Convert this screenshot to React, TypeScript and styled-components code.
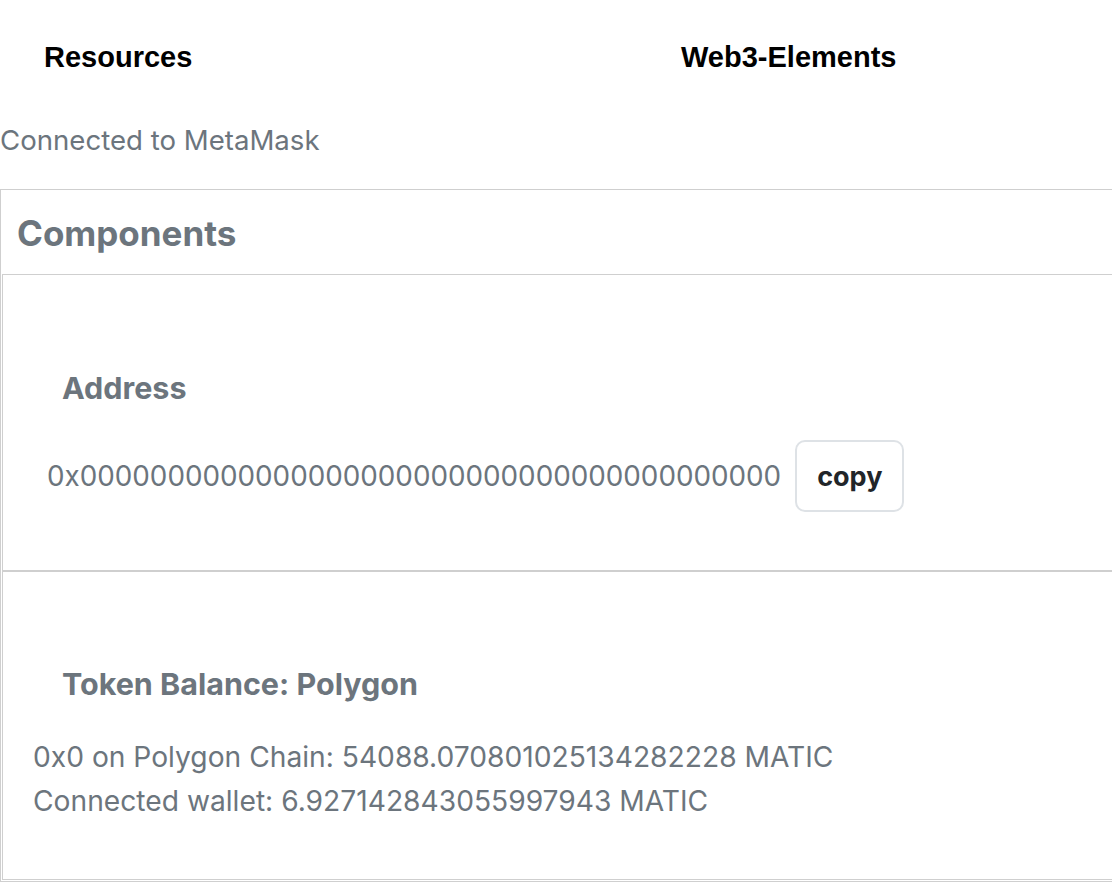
import React from 'react'
import styled, { createGlobalStyle } from 'styled-components'

const GlobalStyle = createGlobalStyle`
  html, body {
    margin: 0;
    padding: 0;
    background: #ffffff;
  }
  body {
    font-family: Inter, "Liberation Sans", sans-serif;
    overflow: hidden;
  }
`

const App: React.FC = () => {
  return (
    <>
      <GlobalStyle />
      <Nav>
        <NavLink>Resources</NavLink>
        <NavLink>Web3-Elements</NavLink>
      </Nav>
      <Status>Connected to MetaMask</Status>
      <Card>
        <CardHeader>Components</CardHeader>
        <CardBody>
          <Panel $top={96}>
            <PanelTitle>Address</PanelTitle>
            <AddressRow>
              <Address>0x0000000000000000000000000000000000000000</Address>
              <CopyButton>copy</CopyButton>
            </AddressRow>
          </Panel>
          <Panel $top={95}>
            <PanelTitle>Token Balance: Polygon</PanelTitle>
            <Balances>
              <Line>0x0 on Polygon Chain: 54088.070801025134282228 MATIC</Line>
              <Line>Connected wallet: 6.927142843055997943 MATIC</Line>
            </Balances>
          </Panel>
        </CardBody>
      </Card>
    </>
  )
}

const Nav = styled.nav`
  display: grid;
  grid-template-columns: 637px auto;
  padding: 40px 0 0 44px;
  height: 40px;
`

const NavLink = styled.a`
  font-family: 'Liberation Sans', Arial, sans-serif;
  font-weight: 700;
  font-size: 29px;
  line-height: 34px;
  color: #000;
  cursor: pointer;
`

const Status = styled.p`
  margin: 0;
  padding-top: 43px;
  height: 66px;
  font-size: 27.6px;
  line-height: 34px;
  color: #6c757d;
`

const Card = styled.section`
  width: 1150px;
  border: 1px solid #cfcfcf;
  border-right: none;
`

const CardHeader = styled.h2`
  margin: 0;
  height: 84px;
  padding-left: 16px;
  font-size: 35px;
  line-height: 86px;
  font-weight: 700;
  color: #6c757d;
`

const CardBody = styled.div`
  padding: 0 0 1px 1px;
`

const Panel = styled.div<{ $top: number }>`
  border: 1px solid #cfcfcf;
  border-right: none;
  padding-top: ${(p) => p.$top}px;
`

const PanelTitle = styled.h3`
  margin: 0 0 0 59px;
  font-size: 30.5px;
  line-height: 34px;
  font-weight: 700;
  color: #6c757d;
`

const AddressRow = styled.div`
  display: flex;
  align-items: center;
  gap: 14px;
  padding: 35px 0 58px 44px;
`

const Address = styled.span`
  font-size: 27.8px;
  color: #6c757d;
`

const CopyButton = styled.button`
  height: 72px;
  padding: 0 20px;
  border: 2px solid #dee2e6;
  border-radius: 10px;
  background: #fff;
  font-family: Inter, sans-serif;
  font-size: 27px;
  font-weight: 700;
  color: #212529;
  cursor: pointer;
`

const Balances = styled.div`
  padding: 34px 0 56px 30px;
`

const Line = styled.div`
  font-size: 28.2px;
  line-height: 44px;
  color: #6c757d;
`

export default App
